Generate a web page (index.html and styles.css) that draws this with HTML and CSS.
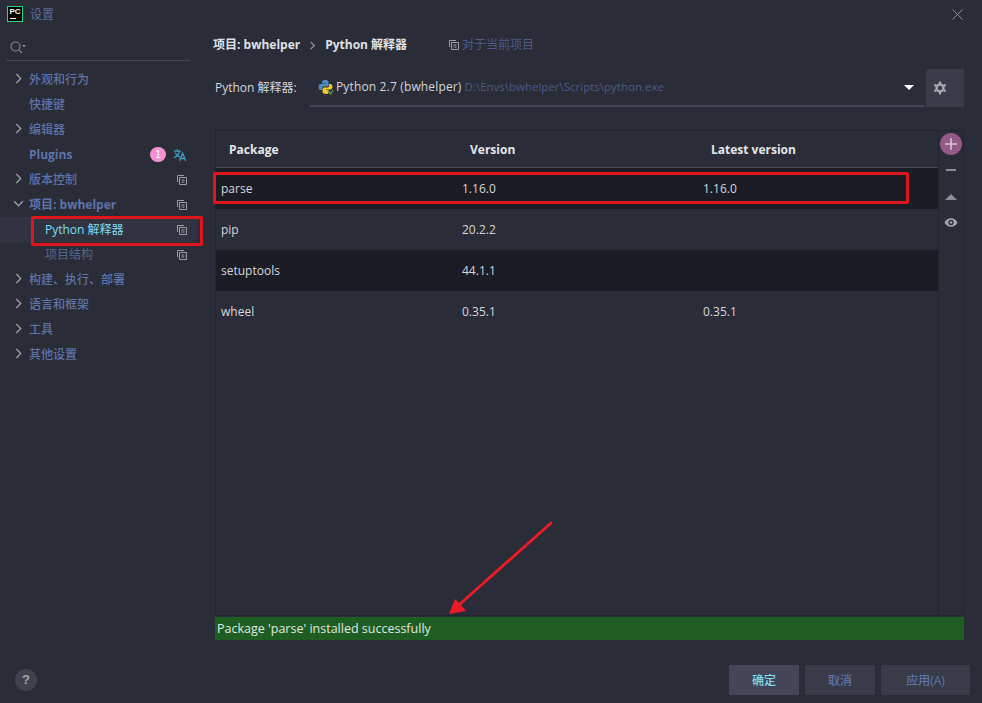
FILE: index.html
```html
<!DOCTYPE html>
<html lang="zh-CN">
<head>
    <meta charset="UTF-8">
    <title>设置</title>
    <link rel="stylesheet" href="styles.css">
</head>
<body>
    <svg class="defs" width="0" height="0">
        <symbol id="copy" viewBox="0 0 10 10">
            <path d="M.5 7V.5H7M2.5 2.5h7v7h-7zM4.5 5h3M4.5 7h3" fill="none" stroke="#9a9ca3"/>
        </symbol>
        <symbol id="arrow" viewBox="0 0 10 10">
            <path d="M3 1l4 4-4 4" fill="none" stroke="#9a9ca3" stroke-width="1.3"/>
        </symbol>
    </svg>

    <div class="dialog">
        <div class="titlebar">
            <div class="logo"><span>PC</span><i></i></div>
            <span class="title">设置</span>
            <svg class="close" width="11" height="11" viewBox="0 0 11 11"><path d="M.5.5l10 10M10.5.5l-10 10" stroke="#8b8d94"/></svg>
        </div>

        <div class="content">
            <!-- Left tree -->
            <aside class="sidebar">
                <div class="search">
                    <svg width="16" height="13" viewBox="0 0 16 13">
                        <circle cx="5.500" cy="5.500" r="4.500" fill="none" stroke="#81838a" stroke-width="1.200"/>
                        <path d="M9 9l3 3" stroke="#81838a" stroke-width="1.200"/>
                        <path d="M12 4h4l-2 2.500z" fill="#81838a"/>
                    </svg>
                </div>
                <ul class="tree">
                    <li><svg class="chev"><use href="#arrow"/></svg><span>外观和行为</span></li>
                    <li><span>快捷键</span></li>
                    <li><svg class="chev"><use href="#arrow"/></svg><span>编辑器</span></li>
                    <li>
                        <span class="bold">Plugins</span>
                        <b class="badge">1</b>
                        <svg class="lang" width="14" height="14" viewBox="0 0 16 14">
                            <path d="M1 2.500h8M5 .5v2M7.500 2.500C7 6 4.500 8.500 1 10M2.500 4.500C3.500 7 5.500 8.500 8 9.500" fill="none" stroke="#3f9bc4" stroke-width="1.400"/>
                            <path d="M7.500 13.500L11 5l3.500 8.500M9 11h4" fill="none" stroke="#3f9bc4" stroke-width="1.600"/>
                        </svg>
                    </li>
                    <li><svg class="chev"><use href="#arrow"/></svg><span>版本控制</span><svg class="copy"><use href="#copy"/></svg></li>
                    <li><svg class="chev open"><use href="#arrow"/></svg><span class="bold">项目: bwhelper</span><svg class="copy"><use href="#copy"/></svg></li>
                    <li class="sub selected"><span>Python 解释器</span><svg class="copy"><use href="#copy"/></svg></li>
                    <li class="sub"><span>项目结构</span><svg class="copy"><use href="#copy"/></svg></li>
                    <li><svg class="chev"><use href="#arrow"/></svg><span>构建、执行、部署</span></li>
                    <li><svg class="chev"><use href="#arrow"/></svg><span>语言和框架</span></li>
                    <li><svg class="chev"><use href="#arrow"/></svg><span>工具</span></li>
                    <li><svg class="chev"><use href="#arrow"/></svg><span>其他设置</span></li>
                </ul>
            </aside>

            <main class="main">
                <div class="crumbs">
                    <b>项目: bwhelper</b>
                    <svg class="crumb-sep"><use href="#arrow"/></svg>
                    <b>Python 解释器</b>
                    <span class="scope"><svg class="copy"><use href="#copy"/></svg>对于当前项目</span>
                </div>

                <div class="interpreter">
                    <label>Python 解释器:</label>
                    <div class="select">
                        <svg class="py" width="16" height="16" viewBox="0 0 16 16">
                            <path d="M7 1C4.500 1 4 2 4 3v1.500h3.500V5H2.500C1 5 .5 6.500.5 8s.5 3 2 3H4V9.500C4 8 5 7.500 6 7.500h3c1 0 1.500-.7 1.500-1.500V3C10.500 1.500 9 1 7 1z" fill="#4b8bbe"/>
                            <path d="M11 5v1.500C11 8 10 8.500 9 8.500H6C5 8.500 4.500 9.200 4.500 10v3c0 1 1.500 2 3.500 2 1 0 2-.3 2.500-1V11H8v-.5h4.500c1 0 2-1 2-2.500s-1-3-2-3z" fill="#f2c52d"/>
                            <path d="M10 11l2.500 4 2.500-4" fill="none" stroke="#5f9e3d" stroke-width="1.300"/>
                        </svg>
                        <span class="py-name">Python 2.7 (bwhelper)</span>
                        <span class="py-path">D:\Envs\bwhelper\Scripts\python.exe</span>
                        <i class="caret"></i>
                    </div>
                    <div class="gear">
                        <svg width="14" height="14" viewBox="0 0 14 14">
                            <circle cx="7" cy="7" r="3.500" fill="none" stroke="#a5a7ad" stroke-width="2.400"/>
                            <path d="M7 .5v2.500M7 11v2.500M1.400 3.800l2.100 1.200M10.500 9l2.100 1.200M1.400 10.200L3.500 9M10.500 5l2.100-1.200" stroke="#a5a7ad" stroke-width="2.200"/>
                        </svg>
                    </div>
                </div>

                <div class="packages">
                    <div class="table">
                        <div class="row head"><span>Package</span><span>Version</span><span>Latest version</span></div>
                        <div class="row dark"><span>parse</span><span>1.16.0</span><span>1.16.0</span></div>
                        <div class="row"><span>pip</span><span>20.2.2</span><span></span></div>
                        <div class="row dark"><span>setuptools</span><span>44.1.1</span><span></span></div>
                        <div class="row"><span>wheel</span><span>0.35.1</span><span>0.35.1</span></div>
                    </div>
                    <div class="tools">
                        <div class="add"><svg width="12" height="12" viewBox="0 0 12 12"><path d="M6 0v12M0 6h12" stroke="#d9c3d2" stroke-width="1.600"/></svg></div>
                        <i class="minus"></i>
                        <i class="up"></i>
                        <svg class="eye" width="14" height="11" viewBox="0 0 14 10">
                            <path d="M.5 5C2 2 4.500.8 7 .8S12 2 13.500 5C12 8 9.500 9.200 7 9.200S2 8 .5 5z" fill="#a5a7ad"/>
                            <circle cx="7" cy="5" r="2.700" fill="#2a2c37"/>
                            <circle cx="7" cy="5" r="1.300" fill="#a5a7ad"/>
                        </svg>
                    </div>
                </div>
                <div class="status">Package 'parse' installed successfully</div>
            </main>
        </div>

        <div class="footer">
            <div class="help">?</div>
            <div class="buttons">
                <button class="primary">确定</button>
                <button>取消</button>
                <button class="wide">应用(A)</button>
            </div>
        </div>
    </div>

    <!-- Red annotations drawn on top of the screenshot -->
    <div class="mark mark-side"></div>
    <div class="mark mark-row"></div>
    <svg class="pointer" width="120" height="100" viewBox="0 0 120 100">
        <path d="M102 3L11 84" stroke="#ed1c24" stroke-width="2.800" stroke-linecap="round"/>
        <path d="M0 94L6 79l5 5 6 7z" fill="#ed1c24"/>
    </svg>
</body>
</html>
```

FILE: styles.css
```css
* {
    box-sizing: border-box;
}
html, body {
    margin: 0;
    padding: 0;
    height: 703px;
    overflow: hidden;
}
body {
    position: relative;
    font-family: "Open Sans", "Noto Sans CJK SC", sans-serif;
    font-size: 12px;
    line-height: 16px;
    color: #5d73ab;
    background: #2a2c37;
}
svg {
    display: block;
}
.defs {
    position: absolute;
}
.dialog {
    display: flex;
    flex-direction: column;
    height: 703px;
}

/* Title bar */
.titlebar {
    display: flex;
    align-items: center;
    height: 30px;
    padding: 0 19px 2px 7px;
    flex: none;
}
.logo {
    position: relative;
    width: 16px;
    height: 16px;
    background: #000;
    border: 1px solid #21d789;
    color: #fff;
    font: bold 8px/9px "Liberation Sans", sans-serif;
    text-align: center;
}
.logo i {
    position: absolute;
    left: 2px;
    bottom: 2px;
    width: 6px;
    height: 1px;
    background: #fff;
}
.title {
    margin: 2px 0 0 7px;
    color: #5a6c99;
}
.close {
    margin-left: auto;
}

.content {
    display: flex;
    height: 630px;
    flex: none;
}

/* Left tree */
.sidebar {
    width: 215px;
    flex: none;
}
.search {
    height: 31px;
    margin: 0 25px 0 6px;
    padding: 11px 0 0 4px;
    border-bottom: 1px solid #44464f;
}
.tree {
    list-style: none;
    margin: 6px 0 0;
    padding: 0;
}
.tree li {
    display: flex;
    align-items: center;
    height: 25px;
    width: 197px;
    padding: 0 10px 0 29px;
    position: relative;
    font-weight: 500;
}
.tree .bold {
    font-weight: 700;
}
.tree .sub {
    padding-left: 45px;
    font-weight: 400;
    color: #54668f;
}
.tree .selected {
    background: #313440;
    color: #7fdcf2;
}
.chev {
    position: absolute;
    left: 13px;
    top: 6px;
    width: 11px;
    height: 11px;
}
.chev.open {
    transform: rotate(90deg);
}
.copy {
    width: 10px;
    height: 10px;
    margin-left: auto;
}
.badge {
    margin-left: auto;
    width: 16px;
    height: 15px;
    border-radius: 8px;
    background: #f48fd1;
    color: #fff;
    font: 400 10px/15px "Liberation Sans", sans-serif;
    text-align: center;
}
.lang {
    margin: 0 0 0 7px;
}

/* Right side */
.main {
    width: 749px;
    flex: none;
}
.crumbs {
    display: flex;
    align-items: center;
    height: 30px;
    margin-left: -2px;
    color: #dfe1e6;
}
.crumbs b {
    font-weight: 700;
}
.crumb-sep {
    width: 9px;
    height: 9px;
    margin: 0 8px;
}
.scope {
    display: flex;
    align-items: center;
    margin-left: 42px;
    color: #4a5b8c;
}
.scope .copy {
    margin: 0 3px 0 0;
}
.interpreter {
    display: flex;
    align-items: center;
    height: 38px;
    margin-top: 9px;
    color: #d5d7dc;
}
.interpreter label {
    width: 95px;
    padding-bottom: 1px;
}
.select {
    display: flex;
    align-items: center;
    width: 614px;
    height: 38px;
    padding: 0 10px 0 8px;
    border-bottom: 2px solid #44465a;
}
.py {
    margin-right: 2px;
}
.py-name {
    letter-spacing: 0.15px;
}
.py-path {
    margin-left: 3px;
    color: #4a5b8c;
    font-size: 11.500px;
}
.caret {
    margin-left: auto;
    border: 5px solid transparent;
    border-top: 5px solid #fff;
    border-bottom: 0;
}
.gear {
    display: flex;
    align-items: center;
    width: 38px;
    height: 38px;
    margin-left: 2px;
    padding-left: 7px;
    background: #393b48;
}

/* Package table */
.packages {
    display: flex;
    height: 486px;
    margin-top: 23px;
    border: 1px solid #23252e;
}
.table {
    width: 723px;
    flex: none;
    border-right: 1px solid #23252e;
    color: #d5d7dc;
}
.row {
    display: grid;
    grid-template-columns: 241px 241px 1fr;
    align-items: center;
    height: 41px;
    padding-left: 5px;
}
.row.dark {
    background: #1b1c24;
}
.row.head {
    height: 37px;
    padding: 1px 0 0 13px;
    border-bottom: 1px solid #4a4c55;
    font-weight: 700;
    color: #e4e6ea;
}
.tools {
    flex: 1;
    display: flex;
    flex-direction: column;
    align-items: center;
}
.add {
    display: flex;
    align-items: center;
    justify-content: center;
    width: 22px;
    height: 22px;
    margin-top: 2px;
    border-radius: 50%;
    background: #915a87;
}
.minus {
    width: 10px;
    height: 2px;
    margin-top: 14px;
    background: #8c8e95;
}
.up {
    margin-top: 23px;
    border: 6px solid transparent;
    border-bottom: 6px solid #8c8e95;
    border-top: 0;
}
.eye {
    margin-top: 17px;
}
.status {
    height: 23px;
    margin-top: 1px;
    padding-left: 2px;
    background: #1e5e22;
    color: #e2e6e2;
    font-size: 12.500px;
    line-height: 24px;
}

/* Footer */
.footer {
    display: flex;
    align-items: center;
    justify-content: space-between;
    height: 43px;
    padding: 5px 12px 8px 15px;
    flex: none;
}
.help {
    width: 22px;
    height: 22px;
    border-radius: 50%;
    background: #3f414d;
    color: #a5a7ad;
    font: 700 13px/22px "Liberation Sans", sans-serif;
    text-align: center;
}
.buttons {
    display: flex;
    gap: 6px;
}
button {
    width: 70px;
    height: 30px;
    padding: 0;
    border: none;
    background: #393b48;
    color: #5d73ab;
    font-family: "Open Sans", "Noto Sans CJK SC", sans-serif;
    font-size: 12px;
    font-weight: 500;
}
button.primary {
    background: #444658;
    color: #7fdcf2;
}
button.wide {
    width: 89px;
}

/* Annotations */
.mark {
    position: absolute;
    border: 3px solid #e0161f;
    border-radius: 2px;
}
.mark-side {
    left: 31px;
    top: 216px;
    width: 172px;
    height: 30px;
}
.mark-row {
    left: 213px;
    top: 172px;
    width: 696px;
    height: 32px;
}
.pointer {
    position: absolute;
    left: 449px;
    top: 520px;
}
```
